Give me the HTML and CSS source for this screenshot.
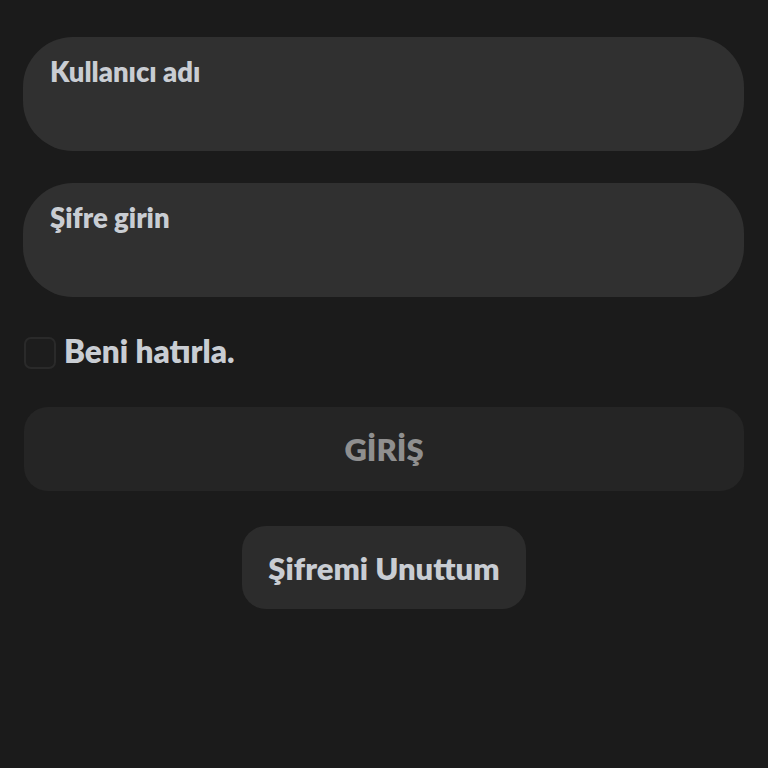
FILE: index.html
```html
<!DOCTYPE html>
<html lang="tr">
<head>
<meta charset="utf-8">
<link rel="stylesheet" href="styles.css">
</head>
<body>
<main class="page">
  <h1 class="title">Hesabınıza giriş yapın</h1>
  <form class="form">
    <label class="field">
      <span class="field-label">Kullanıcı adı</span>
      <input class="field-input" type="text">
    </label>
    <label class="field">
      <span class="field-label">Şifre girin</span>
      <input class="field-input" type="password">
    </label>
    <label class="remember">
      <span class="checkbox"></span>
      <span class="remember-text">Beni hatırla.</span>
    </label>
    <button class="btn-login" type="button">GİRİŞ</button>
    <div class="forgot-row">
      <button class="btn-forgot" type="button">Şifremi Unuttum</button>
    </div>
  </form>
</main>
</body>
</html>
```

FILE: styles.css
```css
html, body {
  margin: 0;
  padding: 0;
  background: #1b1b1b;
  height: 100%;
}
body {
  font-family: "Lato", "Open Sans", sans-serif;
  color: #c9cdd3;
  overflow: hidden;
}
.page {
  display: flow-root;
  padding: 0 24px 0 23px;
}
.title {
  margin: -34px 0 0 22px;
  height: 30px;
  font-size: 30px;
  line-height: 30px;
  font-weight: 800;
  color: #e6e6e6;
  white-space: nowrap;
}
.form {
  display: flex;
  flex-direction: column;
  margin-top: 41px;
}
.field {
  display: flex;
  flex-direction: column;
  height: 114px;
  box-sizing: border-box;
  padding: 19px 27px;
  background: #303030;
  border-radius: 50px;
  margin-bottom: 32px;
}
.field-label {
  font-size: 27.5px;
  line-height: 32px;
  font-weight: 800;
  color: #c9cdd3;
}
.field-input {
  background: transparent;
  border: 0;
  outline: none;
  color: #e0e0e0;
  font: inherit;
  padding: 0;
  margin-top: 6px;
  height: 30px;
}
.remember {
  display: flex;
  align-items: center;
  gap: 8px;
  margin-top: 7px;
  padding-left: 1px;
}
.checkbox {
  width: 28px;
  height: 28px;
  border: 2px solid #2a2a2a;
  border-radius: 7px;
  background: #1d1d1d;
}
.remember-text {
  font-size: 31.5px;
  line-height: 36px;
  font-weight: 800;
  color: #c9cdd3;
  margin-top: -3px;
}
.btn-login {
  margin-top: 38px;
  height: 84px;
  margin-left: 1px;
  border: 0;
  border-radius: 24px;
  background: #252525;
  color: #8f8f8f;
  font-family: inherit;
  font-size: 31px;
  font-weight: 800;
}
.forgot-row {
  display: flex;
  justify-content: center;
  margin-top: 35px;
}
.btn-forgot {
  width: 284px;
  height: 83px;
  margin-left: 1px;
  border: 0;
  border-radius: 24px;
  background: #2c2c2c;
  color: #c9cdd3;
  font-family: inherit;
  font-size: 31px;
  font-weight: 800;
}
```
